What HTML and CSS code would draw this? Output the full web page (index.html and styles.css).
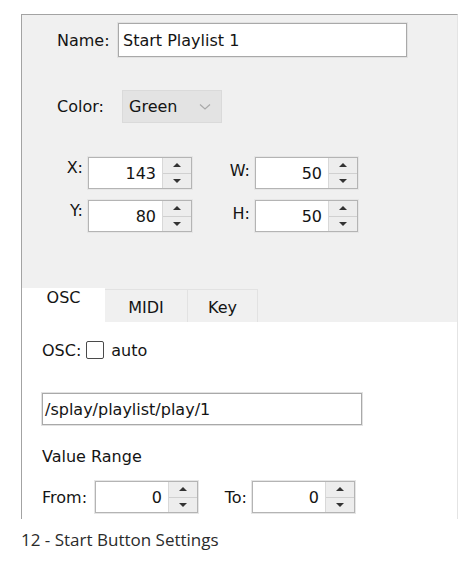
FILE: index.html
```html
<!DOCTYPE html>
<html>
<head>
<meta charset="utf-8">
<link rel="stylesheet" href="styles.css">
</head>
<body>
<div class="shot">
  <div class="panel">
    <div class="top">
      <div class="row name-row">
        <span class="lbl name-lbl">Name:</span>
        <div class="field name-field">Start Playlist 1</div>
      </div>
      <div class="row color-row">
        <span class="lbl color-lbl">Color:</span>
        <div class="combo">
          <span>Green</span>
          <svg class="chev" width="12" height="8" viewBox="0 0 12 8"><polyline points="1,1.5 6,6 11,1.5" fill="none" stroke="#a8a8a8" stroke-width="1.2"/></svg>
        </div>
      </div>
      <div class="geo">
        <div class="geo-row">
          <span class="glbl g1">X:</span>
          <div class="spin s104"><span class="val">143</span><span class="btns"><span class="up"></span><span class="dn"></span></span></div>
          <span class="glbl g2">W:</span>
          <div class="spin s103"><span class="val">50</span><span class="btns"><span class="up"></span><span class="dn"></span></span></div>
        </div>
        <div class="geo-row">
          <span class="glbl g1">Y:</span>
          <div class="spin s104"><span class="val">80</span><span class="btns"><span class="up"></span><span class="dn"></span></span></div>
          <span class="glbl g2">H:</span>
          <div class="spin s103"><span class="val">50</span><span class="btns"><span class="up"></span><span class="dn"></span></span></div>
        </div>
      </div>
    </div>
    <div class="tabs">
      <div class="tab sel">OSC</div>
      <div class="tab t-midi">MIDI</div>
      <div class="tab t-key">Key</div>
    </div>
    <div class="content">
      <div class="osc-row">
        <span>OSC:</span>
        <span class="check"></span>
        <span>auto</span>
      </div>
      <div class="field path-field">/splay/playlist/play/1</div>
      <div class="vr">Value Range</div>
      <div class="range-row">
        <span class="rlbl r1">From:</span>
        <div class="spin s103 h32"><span class="val">0</span><span class="btns"><span class="up"></span><span class="dn"></span></span></div>
        <span class="rlbl r2">To:</span>
        <div class="spin s103 h32"><span class="val">0</span><span class="btns"><span class="up"></span><span class="dn"></span></span></div>
      </div>
    </div>
  </div>
  <div class="caption">12 - Start Button Settings</div>
</div>
</body>
</html>
```

FILE: styles.css
```css
* { box-sizing: border-box; }
html, body { margin: 0; padding: 0; background: #fff; }
body { font-family: "DejaVu Sans", Verdana, sans-serif; font-size: 16px; color: #141414; }

.shot { padding: 14px 0 0 21px; }

.panel {
  width: 437px;
  height: 505px;
  border-top: 1px solid #a3a3a3;
  border-left: 1px solid #a3a3a3;
  border-right: 1px solid #e4e4e4;
  background: #fff;
  display: flex;
  flex-direction: column;
}

.top {
  height: 273px;
  background: #f0f0f0;
  padding-top: 8px;
}

.row { display: flex; align-items: center; }
.lbl { padding-left: 35px; }
.name-lbl { width: 96px; }
.color-lbl { width: 100px; }

.field {
  background: #fff;
  border: 1px solid #a9a9a9;
  box-shadow: 0 0 0 1px #e2e2e2;
  display: flex;
  align-items: center;
  padding-left: 4px;
}
.name-field { width: 289px; height: 34px; }

.color-row { margin-top: 33px; }
.combo {
  width: 100px;
  height: 33px;
  background: #e3e3e3;
  border: 1px solid #dadada;
  display: flex;
  align-items: center;
  padding-left: 6px;
}
.combo .chev { margin-left: 22px; }

.geo { margin-top: 34px; display: flex; flex-direction: column; gap: 11px; }
.geo-row { display: flex; align-items: flex-start; }
.glbl { text-align: right; padding-right: 5px; line-height: 19px; }
.g1 { width: 66px; margin-top: 1px; }
.g2 { width: 63px; margin-top: 4px; }

.spin {
  display: flex;
  height: 32px;
  background: #fff;
  border: 1px solid #b4b4b4;
  box-shadow: 0 0 0 1px #e6e6e6;
}
.s104 { width: 104px; }
.s103 { width: 103px; }
.h32 { height: 32px; }
.spin .val {
  flex: 1;
  text-align: right;
  padding-right: 6px;
  display: flex;
  align-items: center;
  justify-content: flex-end;
}
.spin .btns {
  width: 29px;
  display: flex;
  flex-direction: column;
  background: #ededed;
  border-left: 1px solid #d8d8d8;
}
.spin .up, .spin .dn {
  flex: 1;
  display: flex;
  align-items: center;
  justify-content: center;
}
.spin .up { border-bottom: 1px solid #d0d0d0; }
.spin .up::after {
  content: "";
  border-left: 4px solid transparent;
  border-right: 4px solid transparent;
  border-bottom: 4px solid #333;
}
.spin .dn::after {
  content: "";
  border-left: 4px solid transparent;
  border-right: 4px solid transparent;
  border-top: 4px solid #333;
}

.tabs {
  height: 34px;
  background: #f0f0f0;
  display: flex;
  align-items: flex-end;
}
.tab {
  height: 33px;
  text-align: center;
  padding-top: 8px;
  border: 1px solid #e2e2e2;
  border-bottom: none;
  background: #f0f0f0;
}
.tab.sel {
  width: 83px;
  height: 34px;
  padding-top: 0;
  background: #fff;
  border: none;
}
.t-midi { width: 83px; border-left: none; }
.t-key { width: 70px; border-left: none; }

.content { padding-left: 20px; }
.osc-row { margin-top: 18px; display: flex; align-items: center; height: 20px; }
.check {
  width: 18px;
  height: 18px;
  border: 1px solid #4a4a4a;
  border-radius: 2px;
  background: #fff;
  margin: 0 7px 0 5px;
}
.path-field { margin-top: 33px; width: 320px; height: 32px; padding-left: 2px; }
.vr { margin-top: 22px; line-height: 19px; }
.range-row { margin-top: 15px; display: flex; align-items: center; }
.rlbl { padding-right: 5px; }
.r1 { width: 53px; }
.r2 { width: 54px; text-align: right; }

.caption {
  margin-top: 10px;
  font-family: "Open Sans", "Noto Sans", sans-serif;
  font-size: 17px;
  line-height: 22px;
  color: #2b2b2b;
}
```
